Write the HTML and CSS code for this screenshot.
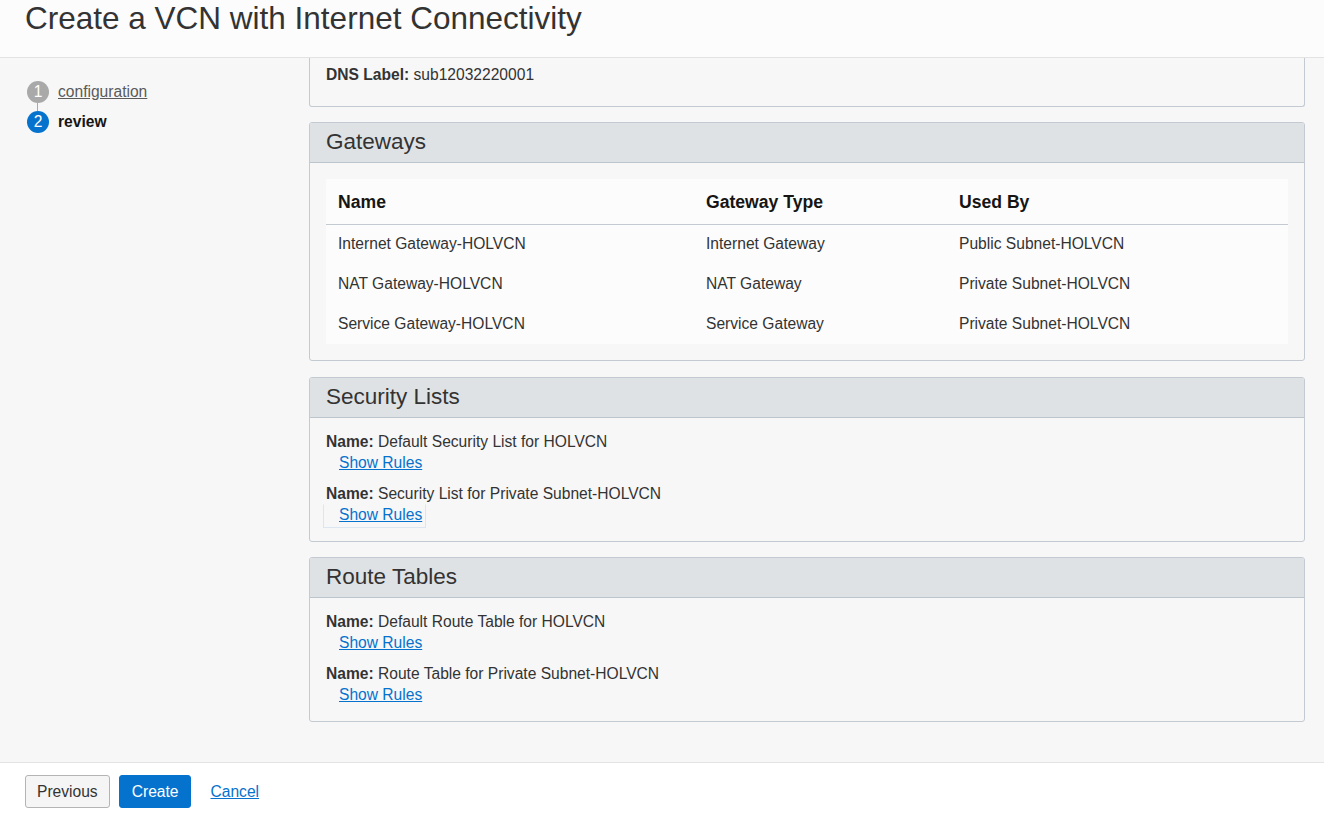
FILE: index.html
```html
<!DOCTYPE html>
<html>
<head>
<meta charset="utf-8">
<link rel="stylesheet" href="styles.css">
</head>
<body>
<div class="page">
  <header class="top">
    <h1 class="title">Create a VCN with Internet Connectivity</h1>
  </header>
  <div class="main">
    <nav class="steps">
      <div class="step">
        <span class="dot dot-done">1</span>
        <a class="step-link" href="#">configuration</a>
      </div>
      <div class="connector"></div>
      <div class="step">
        <span class="dot dot-current">2</span>
        <span class="step-current">review</span>
      </div>
    </nav>
    <div class="content">
      <section class="panel panel-cut">
        <div class="panel-body dns-body">
          <div class="kv"><b>DNS Label:</b> sub12032220001</div>
        </div>
      </section>

      <section class="panel">
        <div class="panel-head">Gateways</div>
        <div class="panel-body table-body">
          <table class="gw">
            <colgroup><col class="c1"><col class="c2"><col></colgroup>
            <thead>
              <tr><th>Name</th><th>Gateway Type</th><th>Used By</th></tr>
            </thead>
            <tbody>
              <tr><td>Internet Gateway-HOLVCN</td><td>Internet Gateway</td><td>Public Subnet-HOLVCN</td></tr>
              <tr><td>NAT Gateway-HOLVCN</td><td>NAT Gateway</td><td>Private Subnet-HOLVCN</td></tr>
              <tr><td>Service Gateway-HOLVCN</td><td>Service Gateway</td><td>Private Subnet-HOLVCN</td></tr>
            </tbody>
          </table>
        </div>
      </section>

      <section class="panel">
        <div class="panel-head">Security Lists</div>
        <div class="panel-body list-body">
          <div class="item">
            <div class="kv"><b>Name:</b> Default Security List for HOLVCN</div>
            <div class="rules"><a href="#">Show Rules</a></div>
          </div>
          <div class="item">
            <div class="kv"><b>Name:</b> Security List for Private Subnet-HOLVCN</div>
            <div class="rules rules-focus"><a href="#">Show Rules</a></div>
          </div>
        </div>
      </section>

      <section class="panel panel-last">
        <div class="panel-head">Route Tables</div>
        <div class="panel-body list-body">
          <div class="item">
            <div class="kv"><b>Name:</b> Default Route Table for HOLVCN</div>
            <div class="rules"><a href="#">Show Rules</a></div>
          </div>
          <div class="item">
            <div class="kv"><b>Name:</b> Route Table for Private Subnet-HOLVCN</div>
            <div class="rules"><a href="#">Show Rules</a></div>
          </div>
        </div>
      </section>
    </div>
  </div>
  <footer class="foot">
    <button class="btn btn-secondary">Previous</button>
    <button class="btn btn-primary">Create</button>
    <a class="cancel" href="#">Cancel</a>
  </footer>
</div>
</body>
</html>
```

FILE: styles.css
```css
* { box-sizing: border-box; }
html, body { margin: 0; padding: 0; }
body {
  font-family: "Liberation Sans", Arial, sans-serif;
  font-size: 15.6px;
  color: #333;
  background: #f7f7f7;
}
.page {
  height: 813px;
  display: flex;
  flex-direction: column;
  overflow: hidden;
}
.top {
  height: 58px;
  flex: none;
  background: #fcfcfc;
  border-bottom: 1px solid #e3e3e3;
  padding-left: 25px;
}
.title {
  margin: 0;
  font-weight: normal;
  font-size: 31.5px;
  line-height: 36px;
  color: #333;
}
.main {
  flex: 1;
  display: flex;
  min-height: 0;
}
.steps {
  width: 309px;
  flex: none;
  padding: 23px 0 0 27px;
}
.step {
  display: flex;
  align-items: center;
  height: 22px;
}
.dot {
  width: 22px;
  height: 22px;
  border-radius: 50%;
  color: #fff;
  font-size: 15.6px;
  display: flex;
  align-items: center;
  justify-content: center;
  margin-right: 9px;
}
.dot-done { background: #a9a9a9; }
.dot-current { background: #0572ce; }
.connector {
  width: 1px;
  height: 8px;
  background: #a9a9a9;
  margin-left: 10px;
}
.step-link { color: #5a5a5a; text-decoration: underline; }
.step-current { font-weight: bold; color: #161513; }
.content {
  width: 996px;
  flex: none;
  display: flex;
  flex-direction: column;
  gap: 16px;
}
.panel {
  border: 1px solid #c3cad2;
  border-radius: 3px;
  background: #f7f7f7;
}
.panel-cut {
  border-top: none;
  border-radius: 0 0 3px 3px;
  margin-bottom: -1px;
}
.panel-last { margin-top: -1px; }
.panel-head {
  height: 40px;
  background: #dfe2e5;
  border-bottom: 1px solid #bcc4cc;
  padding-left: 16px;
  font-size: 22.5px;
  line-height: 38px;
  color: #333;
  border-radius: 2px 2px 0 0;
}
.panel-body { padding: 0 16px; }
.dns-body { padding-top: 6px; height: 48px; }
.kv { line-height: 21px; }
.kv b { color: #333; }
.table-body { padding: 16px; }
.gw {
  width: 100%;
  border-collapse: collapse;
  table-layout: fixed;
  background: #fcfcfc;
}
.gw col.c1 { width: 368px; }
.gw col.c2 { width: 253px; }
.gw th {
  text-align: left;
  font-size: 17.6px;
  font-weight: bold;
  color: #161513;
  height: 45px;
  padding: 3px 0 0 12px;
  border-bottom: 1px solid #c3cad2;
}
.gw td {
  height: 40px;
  padding: 0 0 0 12px;
  color: #333;
}
.list-body {
  padding: 13px 16px 16px;
  display: flex;
  flex-direction: column;
  gap: 10px;
}
.item { display: flex; flex-direction: column; }
.rules {
  display: inline-block;
  align-self: flex-start;
  margin-left: -3px;
  padding: 0 3px 0 15px;
  line-height: 19px;
  border: 1px solid transparent;
}
.rules-focus { border-color: #dbe6f0; border-top-color: transparent; padding-bottom: 3px; margin-bottom: -3px; }
.rules a { color: #0572ce; text-decoration: underline; }
.foot {
  height: 51px;
  flex: none;
  background: #fff;
  border-top: 1px solid #e3e3e3;
  display: flex;
  align-items: center;
  padding: 7px 0 0 25px;
}
.btn {
  font-family: "Liberation Sans", Arial, sans-serif;
  font-size: 15.6px;
  height: 33px;
  border-radius: 3px;
  padding: 0 11px;
  margin-right: 9px;
}
.btn-secondary {
  background: #f5f5f5;
  border: 1px solid #b4b4b4;
  color: #333;
}
.btn-primary {
  background: #0572ce;
  border: 1px solid #0572ce;
  color: #fff;
  padding: 0 12px;
}
.cancel {
  color: #0572ce;
  text-decoration: underline;
  margin-left: 10px;
}
```
